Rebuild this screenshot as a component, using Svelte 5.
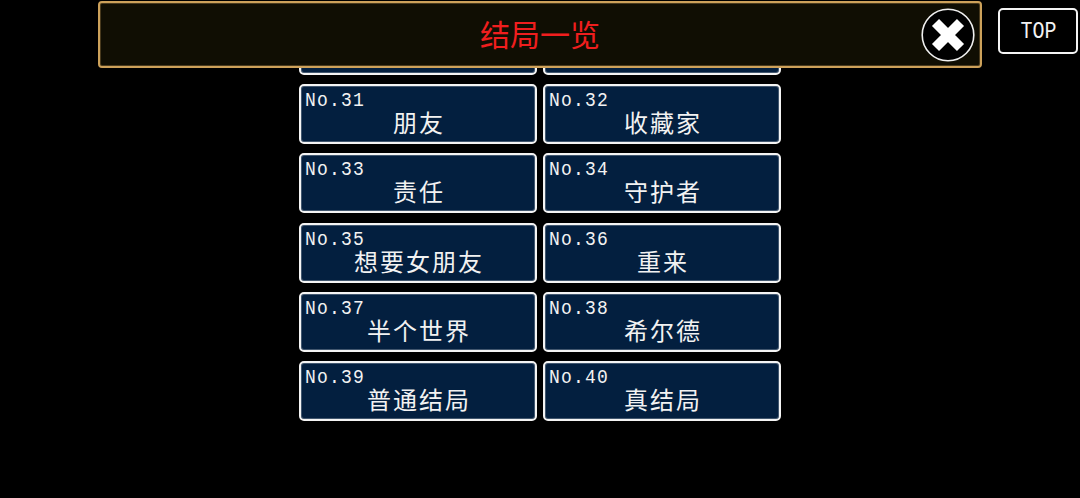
<script>
	const endings = [
		{ no: null, title: '' },
		{ no: null, title: '' },
		{ no: 31, title: '朋友' },
		{ no: 32, title: '收藏家' },
		{ no: 33, title: '责任' },
		{ no: 34, title: '守护者' },
		{ no: 35, title: '想要女朋友' },
		{ no: 36, title: '重来' },
		{ no: 37, title: '半个世界' },
		{ no: 38, title: '希尔德' },
		{ no: 39, title: '普通结局' },
		{ no: 40, title: '真结局' }
	];
</script>

<div class="screen">
	<ul class="list">
		{#each endings as ending}
			<li class="card">
				{#if ending.no}
					<span class="no">No.{ending.no}</span>
					<span class="title">{ending.title}</span>
				{/if}
			</li>
		{/each}
	</ul>

	<header class="head">
		<h1>结局一览</h1>
		<button class="close" type="button" aria-label="close">
			<svg width="54" height="54" viewBox="0 0 54 54">
				<circle cx="27" cy="27" r="25.8" fill="#000" stroke="#f0f0f0" stroke-width="1.6" />
				<path d="M14.5 14.5L39.5 39.5M39.5 14.5L14.5 39.5" stroke="#fff" stroke-width="10" />
			</svg>
		</button>
	</header>

	<button class="top" type="button"><span>TOP</span></button>
</div>

<style>
	:global(body) {
		margin: 0;
		background: #000;
	}

	.screen {
		position: relative;
		width: 1080px;
		height: 498px;
		overflow: hidden;
		background: #000;
		font-family: "Liberation Mono", "Noto Sans CJK SC", monospace;
	}

	.list {
		display: grid;
		grid-template-columns: 238px 238px;
		grid-auto-rows: 60px;
		column-gap: 6px;
		row-gap: 9.25px;
		justify-content: center;
		margin: 0;
		padding: 14.9px 0 0;
		list-style: none;
	}

	.card {
		display: flex;
		flex-direction: column;
		box-sizing: border-box;
		border: 2px solid #f4f4f4;
		border-radius: 5px;
		box-shadow: inset 0 0 0 1px rgba(255, 255, 255, 0.25);
		background: #031f3f;
		color: #f2f2f2;
		padding: 4px 4px 0;
	}

	.no {
		align-self: flex-start;
		font-size: 18px;
		line-height: 20px;
		letter-spacing: 1.2px;
		transform: scaleY(1.15);
	}

	.title {
		font-family: "Noto Sans CJK SC", sans-serif;
		font-size: 24px;
		line-height: 28px;
		letter-spacing: 2px;
		text-align: center;
		margin-top: -2px;
		padding-left: 2px;
	}

	.head {
		position: absolute;
		top: 1px;
		left: 98px;
		box-sizing: border-box;
		width: 884px;
		height: 67px;
		display: flex;
		align-items: center;
		justify-content: center;
		border: 2px solid #cda15a;
		border-radius: 4px;
		box-shadow: inset 0 0 0 1px rgba(205, 161, 90, 0.3);
		background: #100e03;
	}

	h1 {
		margin: -3px 0 0;
		color: #f01e1e;
		font-family: "Noto Sans CJK SC", sans-serif;
		font-size: 30px;
		font-weight: 400;
	}

	.close {
		position: absolute;
		top: 5px;
		right: 5px;
		width: 54px;
		height: 54px;
		padding: 0;
		border: none;
		background: none;
	}

	.close svg {
		display: block;
	}

	.top {
		position: absolute;
		top: 8px;
		left: 998px;
		box-sizing: border-box;
		width: 80px;
		height: 46px;
		border: 2px solid #f4f4f4;
		border-radius: 5px;
		background: #000;
		color: #f2f2f2;
		font-family: "Liberation Mono", monospace;
		font-size: 20px;
		padding: 0 0 0 1px;
	}

	.top span {
		display: inline-block;
		transform: scaleY(1.15);
	}
</style>
